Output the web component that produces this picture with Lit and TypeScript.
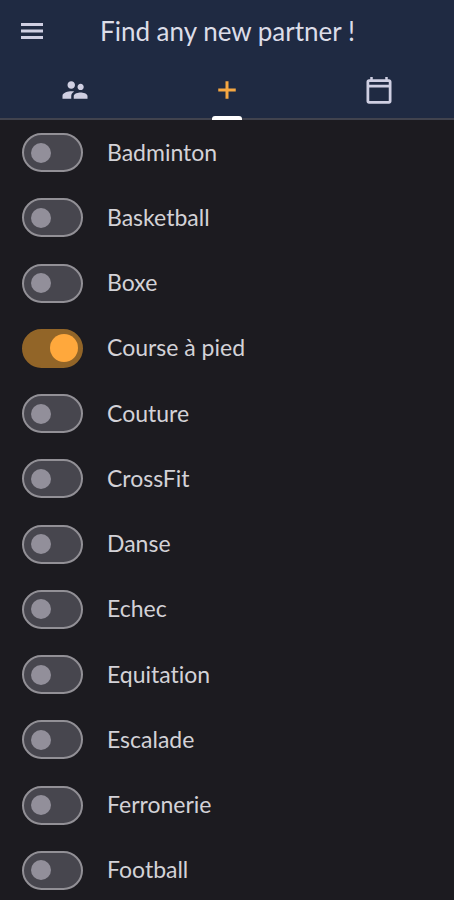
import { LitElement, html, css, svg } from "lit";
import { customElement, state } from "lit/decorators.js";
import { classMap } from "lit/directives/class-map.js";

interface Activity {
  name: string;
  on: boolean;
}

const icons = {
  people: svg`<path d="M16.5 12c1.38 0 2.49-1.12 2.49-2.5S17.88 7 16.5 7 14 8.12 14 9.5s1.12 2.5 2.5 2.5zM9 11c1.66 0 2.99-1.34 2.99-3S10.66 5 9 5 6 6.34 6 8s1.34 3 3 3zm7.5 3c-1.83 0-5.5.92-5.5 2.75V19h11v-2.25c0-1.83-3.67-2.75-5.5-2.75zM9 13c-2.33 0-7 1.17-7 3.5V19h7v-2.25c0-.85.33-2.34 2.37-3.47C10.5 13.1 9.66 13 9 13z"/>`,
  add: svg`<path d="M19 13.200h-5.800v5.800h-2.400v-5.800H5v-2.400h5.800V5h2.400v5.800H19z"/>`,
  calendar: svg`<path fill-rule="evenodd" d="M20 3.400h-1V1.600h-2v1.800H7V1.600H5v1.800H4c-1.100 0-2 .9-2 2v15.600c0 1.100.9 2 2 2h16c1.100 0 2-.9 2-2V5.400c0-1.100-.9-2-2-2zM4.200 5.600h15.600v2.200H4.200zM4.200 10h15.600v10.800H4.200z"/>`,
};

@customElement("app-root")
export class AppRoot extends LitElement {
  @state() private tab = 1;

  @state() private activities: Activity[] = [
    "Badminton",
    "Basketball",
    "Boxe",
    "Course à pied",
    "Couture",
    "CrossFit",
    "Danse",
    "Echec",
    "Equitation",
    "Escalade",
    "Ferronerie",
    "Football",
  ].map((name) => ({ name, on: name === "Course à pied" }));

  static styles = css`
    :host {
      display: flex;
      flex-direction: column;
      height: 100vh;
      background: #1c1b20;
      color: #d3d2d7;
      font-family: Lato, "Open Sans", sans-serif;
      font-variant-ligatures: none;
    }
    button {
      border: 0;
      padding: 0;
      background: none;
      color: inherit;
      cursor: pointer;
    }
    svg {
      display: block;
      fill: currentColor;
    }
    header {
      flex: none;
      background: #1f2a42;
      color: #cfcfe2;
    }
    .bar {
      display: flex;
      align-items: center;
      height: 62px;
    }
    .menu {
      display: grid;
      place-items: center;
      width: 64px;
      height: 62px;
    }
    h1 {
      flex: 1;
      margin: 0;
      padding-left: 36px;
      font-size: 26px;
      line-height: 32px;
      font-weight: 400;
      white-space: nowrap;
      color: #dcdde8;
    }
    .tabs {
      display: grid;
      grid-template-columns: repeat(3, 1fr);
      gap: 2px;
      height: 56px;
      border-bottom: 2px solid #41434e;
    }
    .tab {
      position: relative;
      display: grid;
      place-items: center;
    }
    .tab.active {
      color: #f5a742;
    }
    .tab.active::after {
      content: "";
      position: absolute;
      bottom: -2px;
      left: 50%;
      width: 30px;
      height: 4px;
      margin-left: -15px;
      border-radius: 3px 3px 0 0;
      background: #fff;
    }
    main {
      flex: 1;
      min-height: 0;
      overflow-y: auto;
      scrollbar-width: none;
    }
    ul {
      display: grid;
      grid-auto-rows: minmax(60px, 1fr);
      min-height: calc(100% + 3px);
      margin: 0;
      padding: 0;
      list-style: none;
    }
    label {
      display: flex;
      align-items: center;
      gap: 24px;
      height: 100%;
      padding: 0 22px;
      font-size: 23px;
      line-height: 30px;
      cursor: pointer;
    }
    .name {
      padding-bottom: 2px;
    }
    .switch {
      appearance: none;
      flex: none;
      display: flex;
      align-items: center;
      box-sizing: border-box;
      width: 61px;
      height: 39px;
      margin: 0;
      padding: 0 7px;
      border: 2px solid #929096;
      border-radius: 20px;
      background: #47464e;
      cursor: pointer;
    }
    .switch::before {
      content: "";
      width: 20px;
      height: 20px;
      border-radius: 50%;
      background: #928f9a;
    }
    .switch:checked {
      justify-content: flex-end;
      padding: 0 3px;
      border-color: #926528;
      background: #926528;
    }
    .switch:checked::before {
      width: 28px;
      height: 28px;
      background: #ffa83c;
    }
  `;

  private toggle(index: number) {
    this.activities = this.activities.map((a, i) =>
      i === index ? { ...a, on: !a.on } : a
    );
  }

  private renderTab(label: string, icon: unknown, index: number) {
    return html`<button
      role="tab"
      class=${classMap({ tab: true, active: this.tab === index })}
      aria-label=${label}
      aria-selected=${this.tab === index ? "true" : "false"}
      @click=${() => (this.tab = index)}
    >
      <svg width="30" height="30" viewBox="0 0 24 24" aria-hidden="true">${icon}</svg>
    </button>`;
  }

  render() {
    return html`
      <header>
        <div class="bar">
          <button class="menu" aria-label="Menu">
            <svg width="22" height="16" viewBox="0 0 22 16" aria-hidden="true">
              <path d="M0 0h22v3H0zM0 6.500h22v3H0zM0 13h22v3H0z" />
            </svg>
          </button>
          <h1>Find any new partner !</h1>
        </div>
        <div class="tabs" role="tablist">
          ${this.renderTab("Partners", icons.people, 0)}
          ${this.renderTab("Add", icons.add, 1)}
          ${this.renderTab("Calendar", icons.calendar, 2)}
        </div>
      </header>
      <main>
        <ul>
          ${this.activities.map(
            (a, i) => html`<li>
              <label>
                <input
                  class="switch"
                  type="checkbox"
                  role="switch"
                  .checked=${a.on}
                  @change=${() => this.toggle(i)}
                />
                <span class="name">${a.name}</span>
              </label>
            </li>`
          )}
        </ul>
      </main>
    `;
  }
}
